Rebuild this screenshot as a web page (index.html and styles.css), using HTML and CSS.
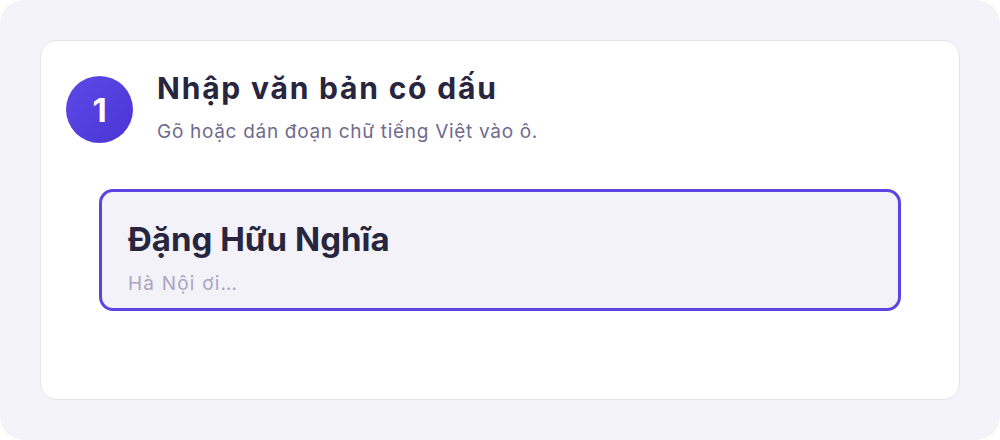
FILE: index.html
```html
<!DOCTYPE html>
<html lang="vi">
<head>
  <meta charset="UTF-8">
  <meta name="viewport" content="width=device-width, initial-scale=1.0">
  <title>Nhập văn bản có dấu</title>
  <link rel="stylesheet" href="styles.css">
</head>
<body>
  <div class="frame">
    <div class="card">
      <div class="step-header">
        <div class="step-badge">1</div>
        <div class="step-text">
          <h1>Nhập văn bản có dấu</h1>
          <p>Gõ hoặc dán đoạn chữ tiếng Việt vào ô.</p>
        </div>
      </div>

      <div class="input-box">
        <div class="input-value">Đặng Hữu Nghĩa</div>
        <div class="input-hint">Hà Nội ơi…</div>
      </div>
    </div>
  </div>
</body>
</html>
```

FILE: styles.css
```css
:root {
  --primary-color: #5a45e2;
  --text-color: #28263f;
  --muted-color: #6f6b8f;
  --hint-color: #a9a5c1;
  --frame-bg: #f5f3fa;
  --input-bg: #f3f2f9;
  --border-color: #e6e3f0;
}

* {
  box-sizing: border-box;
  margin: 0;
  padding: 0;
  font-family: 'Inter', 'Liberation Sans', sans-serif;
}

body {
  background-color: white;
  color: var(--text-color);
}

.frame {
  width: 1000px;
  height: 440px;
  padding: 40px;
  background-color: var(--frame-bg);
  border-radius: 24px;
}

.card {
  height: 360px;
  background-color: white;
  border: 1px solid var(--border-color);
  border-radius: 16px;
  padding: 29px 25px;
}

.step-header {
  display: flex;
  align-items: flex-start;
  gap: 24px;
}

.step-badge {
  flex: none;
  width: 67px;
  height: 67px;
  margin-top: 6px;
  border-radius: 50%;
  background: linear-gradient(135deg, #5c49e6 0%, #4a35d4 100%);
  color: white;
  font-size: 33px;
  font-weight: bold;
  display: flex;
  align-items: center;
  justify-content: center;
}

h1 {
  font-size: 30px;
  line-height: 36px;
  font-weight: bold;
  letter-spacing: 1.8px;
  color: var(--text-color);
}

.step-text p {
  margin-top: 14px;
  font-size: 19px;
  line-height: 24px;
  letter-spacing: 0.7px;
  color: var(--muted-color);
}

.input-box {
  margin: 45px 33px 0;
  background-color: var(--input-bg);
  border: 3px solid var(--primary-color);
  border-radius: 14px;
  padding: 27px 26px 12px;
}

.input-value {
  font-size: 33px;
  line-height: 40px;
  font-weight: bold;
  color: var(--text-color);
}

.input-hint {
  margin-top: 13px;
  font-size: 19px;
  line-height: 24px;
  letter-spacing: 1.2px;
  color: var(--hint-color);
}
```
